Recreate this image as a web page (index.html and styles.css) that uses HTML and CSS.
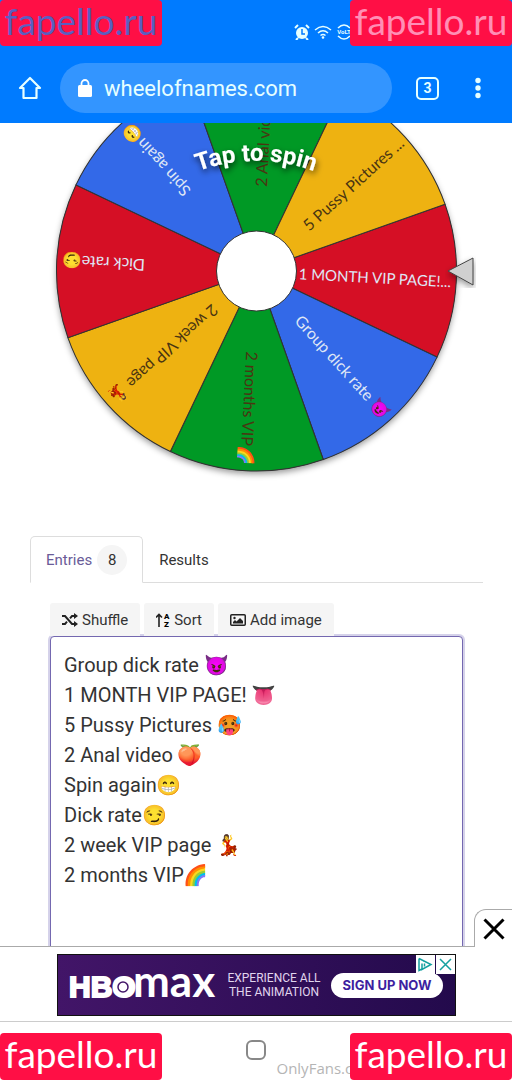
FILE: index.html
```html
<!DOCTYPE html>
<html lang="en">
<head>
    <meta charset="UTF-8">
    <meta name="viewport" content="width=device-width, initial-scale=1.0">
    <title>Wheel of Names</title>
    <link rel="stylesheet" href="styles.css">
</head>
<body>
    <header class="browser">
        <div class="status">
            <svg class="carrier" viewBox="0 0 60 12" aria-hidden="true">
                <path d="M0 4l3-3M6 8q4 2 7 0M16 7h5M26 2q3 0 4 3M42 6h4M52 2v5M52 9v1"/>
            </svg>
            <div class="status-icons">
                <svg viewBox="0 0 16 16" width="16" height="16" aria-hidden="true">
                    <circle cx="8" cy="9" r="6" fill="#e6ffff"/>
                    <path d="M1 4l3-3M15 4l-3-3M4 14l-2 2M12 14l2 2" stroke="#e6ffff" stroke-width="2"/>
                    <path d="M8 5v5h3" fill="none" stroke="#007bff" stroke-width="1.5"/>
                </svg>
                <svg viewBox="0 0 18 14" width="18" height="14" aria-hidden="true">
                    <path d="M1 5q8-7 16 0M4 8q5-4.500 10 0M6.500 10.500q2.500-2 5 0" fill="none" stroke="#e6ffff" stroke-width="1.500"/>
                    <circle cx="9" cy="12.500" r="1.300" fill="#e6ffff"/>
                </svg>
                <svg viewBox="0 0 16 16" width="16" height="16" aria-hidden="true">
                    <path d="M2 4q6-6 12 0M2 12q6 6 12 0" fill="none" stroke="#e6ffff" stroke-width="1.500"/>
                    <text x="8" y="10" font-size="6" font-weight="700" text-anchor="middle" fill="#e6ffff">VoLT</text>
                </svg>
            </div>
        </div>
        <div class="toolbar">
            <button class="icon-btn" aria-label="Home">
                <svg viewBox="0 0 24 24" width="24" height="24"><path d="M12 2L2 12h3.500v10h13V12H22z" fill="none" stroke="#e6ffff" stroke-width="2.200" stroke-linejoin="round"/></svg>
            </button>
            <a class="address" href="#">
                <svg viewBox="0 0 14 18" width="14" height="18" aria-hidden="true">
                    <rect y="6" width="14" height="12" rx="1.500" fill="#fff"/>
                    <path d="M3.500 7V4.500a3.500 3.500 0 0 1 7 0V7" fill="none" stroke="#fff" stroke-width="1.800"/>
                </svg>
                <span>wheelofnames.com</span>
            </a>
            <button class="tab-count">3</button>
            <button class="icon-btn" aria-label="Menu">
                <svg viewBox="0 0 8 24" width="8" height="24"><g fill="#e6ffff"><circle cx="4" cy="4.500" r="2.700"/><circle cx="4" cy="12" r="2.700"/><circle cx="4" cy="19.500" r="2.700"/></g></svg>
            </button>
        </div>
    </header>

    <main>
        <svg class="wheel" viewBox="0 0 512 384" role="img" aria-label="Wheel of names">
            <defs>
                <filter id="shadow" x="-10%" y="-10%" width="120%" height="120%">
                    <feDropShadow dx="0" dy="3" stdDeviation="3" flood-opacity="0.4"/>
                </filter>
                <filter id="textShadow" x="-20%" y="-50%" width="140%" height="200%">
                    <feDropShadow dx="1" dy="3" stdDeviation="3" flood-opacity="0.7"/>
                </filter>
                <path id="arc" d="M186 53A170 170 0 0 1 326 53"/>
                <path id="slice" d="M0 0L184.800-76.500A200 200 0 0 1 184.800 76.500Z"/>
            </defs>
            <g transform="translate(256.500 148)">
                <circle r="200" fill="#333" filter="url(#shadow)"/>
                <g class="slices">
                    <use href="#slice" transform="rotate(3)" fill="#d50f25"/>
                    <use href="#slice" transform="rotate(48)" fill="#3369e8"/>
                    <use href="#slice" transform="rotate(93)" fill="#009925"/>
                    <use href="#slice" transform="rotate(138)" fill="#eeb211"/>
                    <use href="#slice" transform="rotate(183)" fill="#d50f25"/>
                    <use href="#slice" transform="rotate(228)" fill="#3369e8"/>
                    <use href="#slice" transform="rotate(273)" fill="#009925"/>
                    <use href="#slice" transform="rotate(318)" fill="#eeb211"/>
                </g>
                <circle r="40" fill="#fff" stroke="#333"/>
                <g class="labels">
                    <text class="light long" x="195" y="6" transform="rotate(3)">1 MONTH VIP PAGE!...</text>
                    <text class="light" x="195" y="6" transform="rotate(48)">Group dick rate 😈</text>
                    <text x="195" y="6" transform="rotate(93)">2 months VIP🌈</text>
                    <text x="195" y="6" transform="rotate(138)">2 week VIP page 💃</text>
                    <text class="light" x="195" y="6" transform="rotate(183)">Dick rate😏</text>
                    <text class="light" x="195" y="6" transform="rotate(228)">Spin again😁</text>
                    <text x="195" y="6" transform="rotate(273)">2 Anal video 🍑</text>
                    <text x="195" y="6" transform="rotate(318)">5 Pussy Pictures ...</text>
                </g>
            </g>
            <path d="M448 148L473 135V162Z" fill="#d0d0d0" stroke="#444" filter="url(#shadow)"/>
            <text class="tap" filter="url(#textShadow)"><textPath href="#arc" startOffset="50%">Tap to spin</textPath></text>
        </svg>

        <section class="panel">
            <nav class="tabs">
                <a class="tab active" href="#entries">Entries <span class="count">8</span></a>
                <a class="tab" href="#results">Results</a>
            </nav>
            <div class="entries" id="entries">
                <div class="actions">
                    <button>
                        <svg viewBox="0 0 16 14" width="16" height="14"><path d="M0 3h3l7 8h3M0 11h3l2-2.300M8 5.300L10 3h3" fill="none" stroke="#222" stroke-width="2"/><path d="M12 0l4 3-4 3zM12 8l4 3-4 3z" fill="#222"/></svg>
                        Shuffle
                    </button>
                    <button>
                        <svg viewBox="0 0 14 14" width="14" height="14"><path d="M3 14V2M0 4.500L3 1.500l3 3" fill="none" stroke="#222" stroke-width="1.600"/><text x="8" y="6" font-size="8" font-weight="900">A</text><text x="8" y="14" font-size="8" font-weight="900">Z</text></svg>
                        Sort
                    </button>
                    <button>
                        <svg viewBox="0 0 16 12" width="16" height="12"><rect x="0.750" y="0.750" width="14.500" height="10.500" rx="1" fill="none" stroke="#222" stroke-width="1.500"/><circle cx="4.500" cy="4" r="1.200" fill="#222"/><path d="M3 9.500V8l2-2 1.500 1.500L10 4l3 3v2.500z" fill="#222"/></svg>
                        Add image
                    </button>
                </div>
                <textarea aria-label="Entries" spellcheck="false">Group dick rate 😈
1 MONTH VIP PAGE! 👅
5 Pussy Pictures 🥵
2 Anal video 🍑
Spin again😁
Dick rate😏
2 week VIP page 💃
2 months VIP🌈</textarea>
            </div>
        </section>
    </main>

    <aside class="ad">
        <button class="close" aria-label="Close ad">
            <svg viewBox="0 0 22 22" width="22" height="22"><path d="M1.500 1.500l19 19M20.500 1.500l-19 19" stroke="#000" stroke-width="3"/></svg>
        </button>
        <div class="banner">
            <svg class="hbo" viewBox="0 0 148 30" width="148" height="30" role="img" aria-label="HBO max">
                <text x="0" y="27" class="hbo-bold">HBO</text>
                <circle cx="54" cy="17" r="8" fill="#fff"/>
                <circle cx="54" cy="17" r="5" fill="#fff" stroke="#421568" stroke-width="1.500"/>
                <text x="64" y="27" class="hbo-max">max</text>
            </svg>
            <p>EXPERIENCE ALL<br>THE ANIMATION</p>
            <button class="signup">SIGN UP NOW</button>
            <div class="adchoices">
                <svg viewBox="0 0 19 19" width="19" height="19"><rect width="19" height="19" fill="#fff"/><path d="M3 3.500l12 6-9 5v-6M3 3.500v12l3-1.500" fill="none" stroke="#13a0a0" stroke-width="1.500"/><path d="M8.500 6v1M8.500 8.500v3" stroke="#13a0a0" stroke-width="1.500"/></svg>
                <svg viewBox="0 0 19 19" width="19" height="19"><rect width="19" height="19" fill="#fff"/><path d="M4 4l11 11M15 4L4 15" stroke="#13a0a0" stroke-width="1.500"/></svg>
            </div>
        </div>
    </aside>

    <footer class="navbar">
        <button class="home-key" aria-label="Home key"></button>
        <span class="source">OnlyFans.com</span>
    </footer>

    <div class="mark top left">fapello.ru</div>
    <div class="mark top right">fapello.ru</div>
    <div class="mark bottom left">fapello.ru</div>
    <div class="mark bottom right">fapello.ru</div>
</body>
</html>
```
FILE: styles.css
```css
* {
    box-sizing: border-box;
}
body {
    margin: 0;
    height: 100vh;
    display: flex;
    flex-direction: column;
    overflow: hidden;
    background-color: #fff;
    color: #333;
    font-family: Roboto, "Noto Color Emoji", sans-serif;
    font-size: 15px;
}
button {
    border: 0;
    padding: 0;
    background: none;
    font: inherit;
    color: inherit;
    cursor: pointer;
}
a {
    color: inherit;
    text-decoration: none;
}
svg {
    display: block;
}

/* browser chrome */
.browser {
    flex: none;
    background-color: #007bff;
    color: #e6ffff;
}
.status {
    display: flex;
    justify-content: space-between;
    align-items: center;
    height: 63px;
    padding: 0 160px 0 34px;
}
.carrier {
    width: 60px;
    height: 12px;
    fill: none;
    stroke: #fff;
    stroke-width: 2;
}
.status-icons {
    display: flex;
    align-items: center;
    gap: 4px;
}
.toolbar {
    display: flex;
    align-items: center;
    height: 60px;
    padding: 0 30px 10px 18px;
}
.address {
    flex: 1;
    display: flex;
    align-items: center;
    gap: 12px;
    height: 50px;
    margin: 0 24px 0 18px;
    padding-left: 18px;
    border-radius: 25px;
    background-color: #3395ff;
    font-size: 22px;
}
.tab-count {
    width: 23px;
    height: 23px;
    margin-right: 35px;
    border: 2px solid #e6ffff;
    border-radius: 5px;
    font-size: 14px;
    font-weight: 700;
    line-height: 19px;
}

/* wheel */
main {
    flex: 1;
    min-height: 0;
    overflow: hidden;
}
.wheel {
    width: 100%;
}
.slices {
    stroke: #333;
    stroke-width: 1;
}
.labels {
    font-family: Lato, "Noto Color Emoji", sans-serif;
    font-size: 16px;
    text-anchor: end;
    fill: #4a3512;
}
.labels .light {
    fill: #dfe6f5;
}
.labels .long {
    font-size: 15px;
}
.tap {
    font-size: 24px;
    font-weight: 700;
    text-anchor: middle;
    fill: #fff;
}

/* tabs and entries */
.panel {
    margin: 29px 29px 0 30px;
}
.tabs {
    display: flex;
    height: 47px;
    border-bottom: 1px solid #ddd;
}
.tab {
    display: flex;
    align-items: center;
    gap: 5px;
    height: 47px;
    padding: 0 15px;
    border: 1px solid transparent;
}
.tab.active {
    border-color: #ddd;
    border-bottom-color: #fff;
    border-radius: 5px 5px 0 0;
    color: #6a5c98;
}
.count {
    width: 30px;
    height: 30px;
    border-radius: 15px;
    background-color: #f5f5f5;
    color: #333;
    line-height: 30px;
    text-align: center;
}
.entries {
    padding: 20px 20px 0;
}
.actions {
    display: flex;
    gap: 4px;
}
.actions button {
    display: flex;
    align-items: center;
    gap: 4px;
    height: 33px;
    padding: 0 12px;
    border-radius: 3px 3px 0 0;
    background-color: #f5f5f5;
}
textarea {
    display: block;
    width: 100%;
    height: 330px;
    padding: 13px;
    border: 1px solid #7468b0;
    border-radius: 4px;
    outline: 0;
    box-shadow: 0 0 0 2px #d5d2ea;
    resize: none;
    overflow: hidden;
    color: #333;
    font-family: Roboto, "Noto Color Emoji", sans-serif;
    font-size: 20px;
    line-height: 30px;
}

/* ad */
.ad {
    flex: none;
    position: relative;
    padding: 7px 56px 5px 57px;
    border-top: 1px solid #aaa;
    border-bottom: 1px solid #ccc;
    background-color: #fff;
}
.close {
    position: absolute;
    right: 0;
    bottom: 100%;
    display: flex;
    align-items: center;
    justify-content: center;
    width: 38px;
    height: 38px;
    border: 1px solid #aaa;
    border-width: 1px 0 0 1px;
    border-radius: 12px 0 0 0;
    background-color: #fff;
}
.banner {
    position: relative;
    display: flex;
    align-items: center;
    height: 62px;
    padding: 0 12px 0 11px;
    border: 1px solid #111;
    background: linear-gradient(90deg, #421568, #230a4c);
    color: #fff;
}
.hbo {
    fill: #fff;
}
.hbo-bold {
    font-family: "Liberation Sans", sans-serif;
    font-size: 30px;
    font-weight: 700;
    stroke: #fff;
    stroke-width: 2;
}
.hbo-max {
    font-family: Lato, sans-serif;
    font-size: 44px;
    font-weight: 700;
}
.banner p {
    flex: 1;
    margin: 0;
    color: #e0d5ee;
    font-size: 12px;
    line-height: 14px;
    text-align: center;
}
.signup {
    width: 112px;
    height: 25px;
    border-radius: 13px;
    background-color: #fff;
    color: #3d1fa0;
    font-family: Inter, sans-serif;
    font-size: 13px;
    font-weight: 700;
}
.adchoices {
    position: absolute;
    top: 0;
    right: 0;
    display: flex;
    gap: 1px;
}

/* system nav */
.navbar {
    flex: none;
    position: relative;
    display: flex;
    justify-content: center;
    height: 58px;
    padding-top: 18px;
}
.home-key {
    width: 20px;
    height: 20px;
    border: 2px solid #888;
    border-radius: 6px;
}
.source {
    position: absolute;
    left: 54%;
    bottom: 2px;
    color: #b5b5b5;
    font-family: "Open Sans", sans-serif;
    font-size: 15px;
}

/* watermarks */
.mark {
    position: absolute;
    width: 162px;
    height: 46px;
    background-color: #ff0f45;
    color: #fff;
    font-family: Lato, sans-serif;
    font-size: 37px;
    line-height: 42px;
    text-align: center;
}
.mark.top {
    top: 0;
    border-radius: 4px;
}
.mark.bottom {
    bottom: 0;
    height: 47px;
    border-radius: 4px;
}
.mark.left {
    left: 0;
}
.mark.right {
    right: 0;
}
.mark.top.left {
    color: #5a5fc0;
}
.mark.top.right {
    color: #ff8fb5;
}
```
